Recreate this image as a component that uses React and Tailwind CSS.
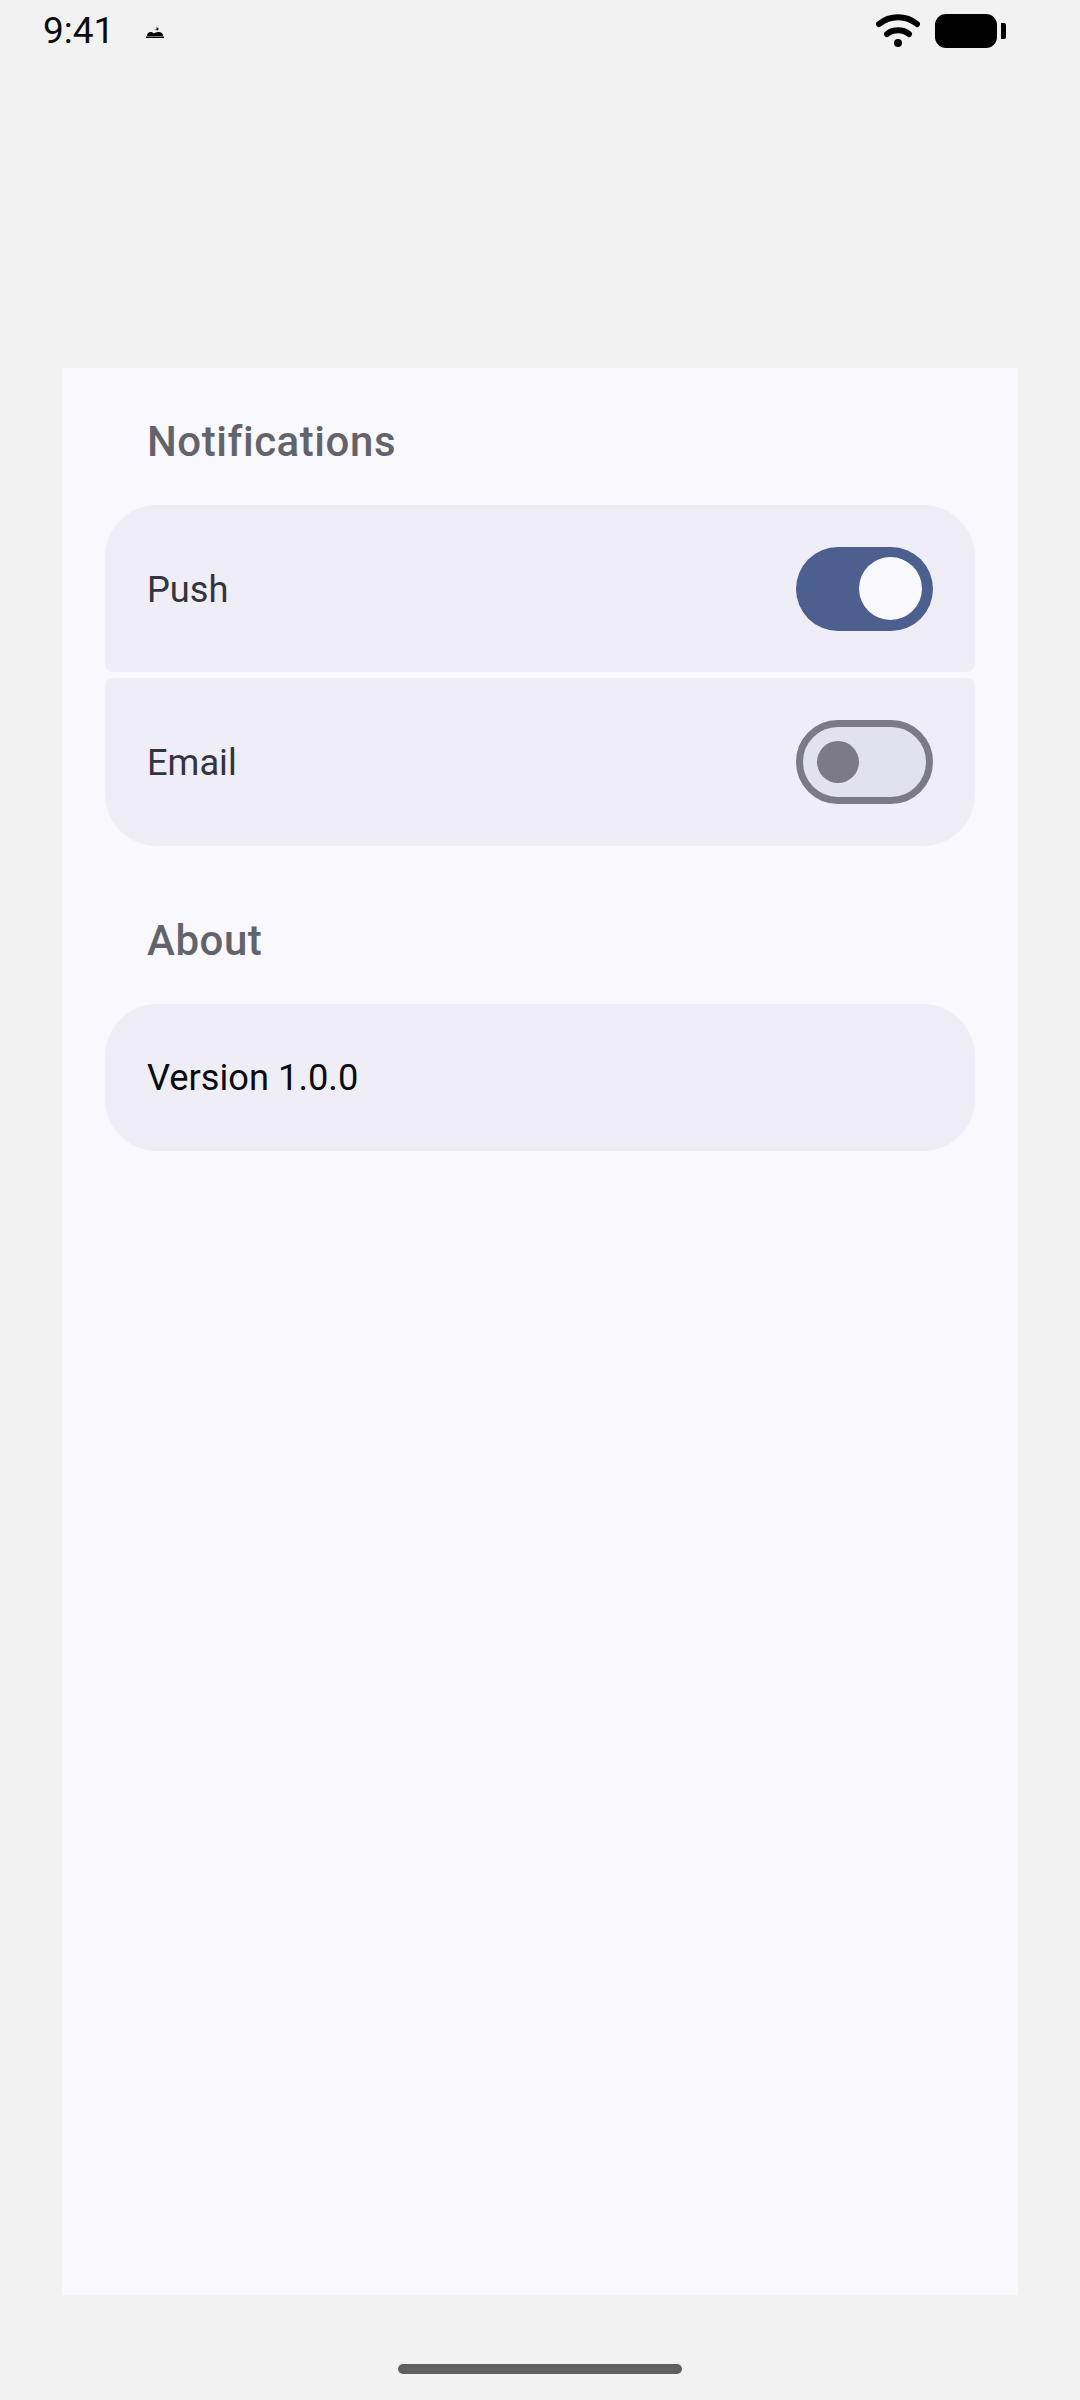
import React from 'react';

const Toggle = ({ on }) => {
  if (on) {
    return (
      <div className="flex h-[84px] w-[137px] items-center justify-end rounded-full bg-[#4c5f8f] pr-[11px]">
        <div className="h-[63px] w-[63px] rounded-full bg-[#f9f8fd]" />
      </div>
    );
  }
  return (
    <div className="flex h-[84px] w-[137px] items-center rounded-full border-[7px] border-[#7b7a85] bg-[#e2e2ec] pl-[14px]">
      <div className="h-[42px] w-[42px] rounded-full bg-[#7b7a85]" />
    </div>
  );
};

const Row = ({ label, on, className }) => (
  <div className={`flex items-center justify-between bg-[#efeef7] pl-[42px] pr-[42px] ${className}`}>
    <span className="pt-[2px] text-[36.25px] leading-[50px] text-[#34343f]">{label}</span>
    <Toggle on={on} />
  </div>
);

const Heading = ({ children, className }) => (
  <h2 className={`pl-[42px] text-[42px] font-medium leading-[56px] tracking-[0.55px] text-[#63646b] ${className}`}>
    {children}
  </h2>
);

const StatusBar = () => (
  <div className="flex h-[62px] items-start justify-between pl-[43px] pr-[74px]">
    <div className="flex items-center">
      <span className="text-[37px] leading-[62px] text-[#0c0c0c]">9:41</span>
      <svg className="ml-[32px] mt-[2px] h-[12px] w-[18px]" viewBox="0 0 18 12" fill="#000">
        <path d="M0 10.500h18v1.500H0zM1 10c0-3 2-4 3.500-4S7 6.500 8 7.500C9 6.500 11 6 13 6s4 1 4 4zM7 3.500l3.500-.5V1l2.500 2-2 2-.5-1.500z" />
      </svg>
    </div>
    <div className="flex items-start pt-[14px]">
      <svg className="mr-[15px] h-[34px] w-[44px]" viewBox="0 0 44 34" fill="none" stroke="#000" strokeLinecap="round">
        <path d="M3 10C14 1 30 1 41 10" strokeWidth="6" />
        <path d="M11 20C17 15 27 15 33 20" strokeWidth="6" />
        <circle cx="22" cy="29" r="4" fill="#000" stroke="none" />
      </svg>
      <div className="h-[34px] w-[62px] rounded-[11px] bg-black" />
      <div className="ml-[4px] mt-[9px] h-[16px] w-[5px] rounded-r-[2px] bg-black" />
    </div>
  </div>
);

const App = () => {
  return (
    <div className="flex h-[2400px] w-[1080px] flex-col bg-[#f2f2f2] font-['Roboto',sans-serif]">
      <StatusBar />
      <main className="ml-[62px] mt-[306px] flex h-[1927px] w-[956px] flex-col bg-[#f9f8fd] px-[43px] pt-[46px]">
        <Heading className="mb-[35px]">Notifications</Heading>
        <div className="flex flex-col gap-[6px]">
          <Row label="Push" on className="h-[167px] rounded-t-[52px] rounded-b-[8px]" />
          <Row label="Email" className="h-[168px] rounded-t-[8px] rounded-b-[52px]" />
        </div>
        <Heading className="mb-[35px] mt-[67px]">About</Heading>
        <div className="flex h-[147px] items-center rounded-[52px] bg-[#efeef7] pl-[42px]">
          <span className="text-[36.25px] leading-[50px] text-[#0b0b10]">Version 1.0.0</span>
        </div>
      </main>
      <div className="flex flex-1 justify-center pt-[69px]">
        <div className="h-[10px] w-[284px] rounded-full bg-[#606060]" />
      </div>
    </div>
  );
};

export default App;
